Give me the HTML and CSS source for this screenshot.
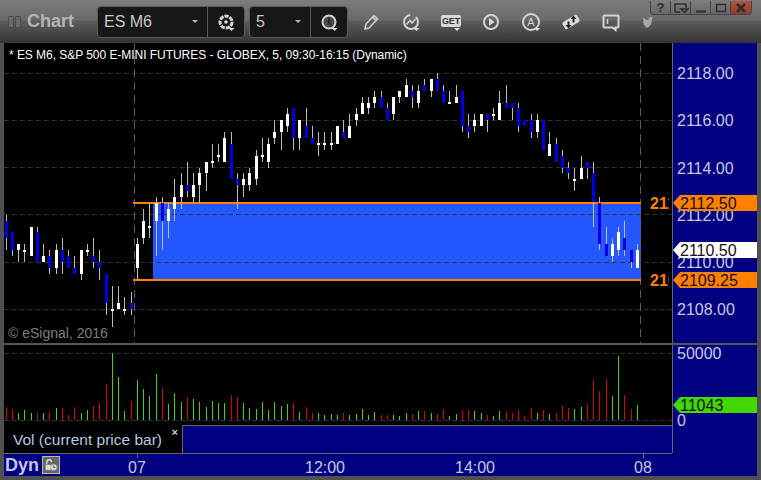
FILE: index.html
```html
<!DOCTYPE html>
<html lang="en">
<head>
<meta charset="utf-8">
<title>Chart</title>
<link rel="stylesheet" href="styles.css">
</head>
<body>
<div class="app">
  <header class="toolbar">
    <div class="grip"><span></span><span></span></div>
    <div class="app-title">Chart</div>
    <div class="combo combo-symbol">
      <div class="combo-field"><span>ES M6</span><i class="caret"></i></div>
      <button class="combo-btn">
        <svg class="icon" viewBox="0 0 20 20"><circle cx="10" cy="10" r="6" class="s-thick" stroke-dasharray="4.200 1"/><circle cx="10" cy="10" r="1.800" class="f"/><path d="M12.500 16h6l-3 3z" class="f"/></svg>
      </button>
    </div>
    <div class="combo combo-interval">
      <div class="combo-field"><span>5</span><i class="caret"></i></div>
      <button class="combo-btn">
        <svg class="icon" viewBox="0 0 20 20"><circle cx="10" cy="10" r="6.500" class="s-med ring-fill"/><path d="M10 5.500V10.500L13 14" class="s-dark"/><path d="M12.500 16h6l-3 3z" class="f"/></svg>
      </button>
    </div>
    <div class="tools">
      <svg class="icon" viewBox="0 0 20 20"><path d="M4 17l1-5L13 3.500l3.500 3.500L8 16z" class="s-thin"/><path d="M11.500 5l3.500 3.500" class="s-thin"/></svg>
      <svg class="icon" viewBox="0 0 20 20"><circle cx="10" cy="10" r="7" class="s-med" stroke-dasharray="32 6"/><path d="M5.500 12.500L9 8.500l2 2.500 3.500-4" class="s-thin"/><path d="M12.500 16h6l-3 3z" class="f"/></svg>
      <div class="tool-get"><span>GET</span><i></i></div>
      <svg class="icon" viewBox="0 0 20 20"><circle cx="10" cy="10" r="7" class="s-med"/><path d="M8 6l5.500 4L8 14z" class="f"/></svg>
      <div class="tool-auto"><span>A</span><i></i></div>
      <svg class="icon" viewBox="0 0 20 20"><rect x="1.500" y="6" width="17" height="8" rx="2" class="f" transform="rotate(-32 10 10)"/><path d="M12.500 3.500l-3 3.500h2v3.500h2V7h2z" class="f-dark"/><path d="M7.500 16.500l3-3.500h-2V9.500h-2V13h-2z" class="f-dark"/></svg>
      <svg class="icon" viewBox="0 0 20 20"><path d="M3.500 3.500h13a1 1 0 0 1 1 1v10a1 1 0 0 1-1 1h-2v2.500l-3-2.500h-8a1 1 0 0 1-1-1v-10a1 1 0 0 1 1-1z" class="s-med"/><path d="M6.500 7v5" class="s-thin"/></svg>
      <svg class="icon-bird" viewBox="0 0 20 20"><path d="M19 1l-2 2.500 2 0-2 2c0 6-2 11-7 13l-6 .5c2-.5 3-1.500 4-2.500-3 0-4-2-4.500-3h2C3.500 12 3 10 3 8.500l2 .5C3 7 3 4 4 3c2 2.500 4.500 4 7.500 4-.5-3 1.500-5 4-5 1 0 2 .5 2.500 1z" class="f-bird"/></svg>
    </div>
    <div class="window-btns">
      <button class="win-btn win-help">?</button>
      <button class="win-btn"><svg viewBox="0 0 20 14"><path d="M4 11V3h11v4M9 11h-5M10 8h7l-3.500 3.500z" class="win-glyph"/></svg></button>
      <button class="win-btn"><svg viewBox="0 0 20 14"><path d="M5 10.500h10" class="win-glyph win-heavy"/></svg></button>
      <button class="win-btn"><svg viewBox="0 0 20 14"><path d="M5.500 3.500h9v7h-9z" class="win-glyph"/></svg></button>
      <button class="win-btn win-close"><svg viewBox="0 0 20 14"><path d="M6 3l8 8M14 3l-8 8" class="win-glyph win-x"/></svg></button>
    </div>
  </header>

  <main class="chart-grid">
    <section class="pane price-pane">
      <div class="study-title">* ES M6, S&amp;P 500 E-MINI FUTURES - GLOBEX, 5, 09:30-16:15 (Dynamic)</div>
      <div class="copyright">© eSignal, 2016</div>
      <svg id="price-plot" class="plot" viewBox="4 43 668 300" width="668" height="300"></svg>
    </section>
    <svg id="price-axis" class="axis price-axis" viewBox="672 43 85 300" width="85" height="300"></svg>

    <section class="pane vol-pane">
      <svg id="vol-plot" class="plot" viewBox="4 345 668 80" width="668" height="80"></svg>
    </section>
    <svg id="vol-axis" class="axis vol-axis" viewBox="672 343 85 82" width="85" height="82"></svg>

    <div class="legend">
      <div class="legend-label"><span>Vol (current price bar)</span><b class="legend-close">×</b></div>
      <div class="legend-fill"></div>
    </div>
    <div class="axis-fill legend-axis"></div>

    <footer class="time-axis">
      <div class="dyn">Dyn</div>
      <div class="lock">
        <svg viewBox="0 0 17 17"><path d="M4 8V5.500a2.500 2.500 0 0 1 5 0" class="lock-shackle"/><path d="M2.500 8h7v6h-7z" class="lock-body"/><circle cx="11.500" cy="11" r="3.500" class="lock-body"/><path d="M11.500 9v2.200h1.500" class="lock-hand"/></svg>
      </div>
      <span class="tick tick-07">07</span>
      <span class="tick tick-12">12:00</span>
      <span class="tick tick-14">14:00</span>
      <span class="tick tick-08">08</span>
    </footer>
    <div class="axis-fill time-axis-fill"></div>
  </main>
</div>
<script src="chart.js"></script>
</body>
</html>
```
FILE: styles.css
```css
* { box-sizing: border-box; }
html, body { margin: 0; padding: 0; background: #555; }
body { width: 761px; height: 480px; overflow: hidden; font-family: "Liberation Sans", Arial, sans-serif; }

.app { position: relative; width: 761px; height: 480px; display: flex; flex-direction: column; background: #505050; }

/* toolbar */
.toolbar {
  height: 43px; flex: none; display: flex; align-items: center; position: relative; padding-left: 8px;
  background: linear-gradient(#7c7c7c 0, #696969 20px, #5c5c5c 21px, #343434 43px);
}
.grip { display: flex; gap: 1px; width: 15px; }
.grip span { width: 6px; height: 12px; border: 1px solid #4a4a4a; background: #6a6a6a; border-radius: 1px; }
.app-title { margin-left: 4px; width: 70px; font-size: 18px; font-weight: bold; color: #b4b4b4; }
.combo { display: flex; height: 32px; border: 1px solid #5a5a5a; border-radius: 4px; background: #171717; }
.combo-symbol { width: 148px; }
.combo-interval { width: 99px; margin-left: 4px; }
.combo-field { flex: 1; display: flex; align-items: center; justify-content: space-between; padding: 0 9px 0 6px; color: #c8c8c8; font-size: 16px; border-right: 1px solid #5a5a5a; }
.caret { width: 0; height: 0; border: 3px solid transparent; border-top-color: #bbb; border-bottom: 0; }
.combo-btn { width: 36px; border: 0; padding: 0; background: none; display: flex; align-items: center; justify-content: center; }
.icon { width: 20px; height: 20px; flex: none; display: block; }
.s-thick { fill: none; stroke: #d4d4d4; stroke-width: 3; }
.s-med { fill: none; stroke: #d4d4d4; stroke-width: 2; }
.s-thin { fill: none; stroke: #d4d4d4; stroke-width: 1.500; }
.s-dark { fill: none; stroke: #222; stroke-width: 1.500; }
.ring-fill { fill: #4a4a4a; }
.f { fill: #dedede; }
.f-dark { fill: #222; }
.f-bird { fill: #a8a8a8; }

.tools { display: flex; align-items: center; gap: 20px; margin-left: 13px; }
.tool-get { position: relative; width: 20px; height: 20px; }
.tool-get span { position: absolute; left: 0; top: 3px; width: 20px; height: 12px; border-radius: 2px; background: #d8d8d8; color: #333; font-size: 9px; font-weight: bold; line-height: 12px; text-align: center; letter-spacing: -.2px; }
.tool-get i, .tool-auto i { position: absolute; right: 1px; bottom: 1px; width: 0; height: 0; border: 3px solid transparent; border-top-color: #e0e0e0; border-bottom: 0; }
.tool-auto { position: relative; width: 20px; height: 20px; }
.tool-auto span { position: absolute; left: 3px; top: 3px; width: 14px; height: 14px; border-radius: 50%; box-shadow: 0 0 0 2px #d4d4d4; color: #d4d4d4; font-size: 11px; line-height: 14px; text-align: center; }
.icon-bird { width: 13px; height: 14px; flex: none; display: block; }

.window-btns { position: absolute; right: 9px; top: 1px; display: flex; height: 14px; border: 1px solid #454545; border-top: 0; border-radius: 0 0 4px 4px; overflow: hidden; background: linear-gradient(#7d7d7d, #686868); }
.win-btn { width: 20px; padding: 0; border: 0; border-right: 1px solid #454545; background: none; color: #2e2e2e; font: bold 13px/13px "Liberation Sans", sans-serif; }
.win-btn svg { display: block; width: 20px; height: 14px; }
.win-close { border-right: 0; background: linear-gradient(#b0563f, #8e3d2a); }
.win-glyph { fill: none; stroke: #2e2e2e; stroke-width: 1.500; }
.win-heavy { stroke-width: 2; }
.win-x { stroke-width: 2.500; }

/* chart */
.chart-grid {
  flex: none; margin-left: 4px; width: 753px; height: 433px; display: grid;
  grid-template-columns: 668px 85px; grid-template-rows: 300px 82px 28px 23px;
}
.pane { position: relative; background: #000; overflow: hidden; }
.plot, .axis { display: block; shape-rendering: crispEdges; }
.plot text, .axis text { shape-rendering: auto; font-family: "Liberation Sans", Arial, sans-serif; }
.study-title { position: absolute; left: 5px; top: 5px; z-index: 1; color: #fff; font-size: 12px; line-height: 15px; white-space: nowrap; letter-spacing: -.045px; }
.copyright { position: absolute; left: 4px; top: 282px; z-index: 1; color: #7e7e7e; font-size: 14px; line-height: 16px; white-space: nowrap; }
.axis { background: #000080; }
.axis text.label { fill: #c8c8e4; font-size: 16px; }
.axis text.flag-text { fill: #111; font-size: 16px; }
.plot text.level { fill: #ff8000; font-size: 16px; font-weight: bold; }
.vol-pane { padding-top: 0; border-top: 2px solid #555; }
.vol-axis { position: relative; z-index: 1; overflow: visible; }

.legend { display: flex; }
.legend-label { position: relative; width: 178px; background: #000; color: #b4c8e4; font-size: 15.500px; line-height: 28px; padding: 1px 0 0 9px; white-space: nowrap; }
.legend-close { position: absolute; right: 4px; top: -7px; color: #ccc; font-size: 11px; font-weight: bold; }
.legend-fill { flex: 1; background: #000080; border-top: 1px solid #666; border-left: 1px solid #666; }
.axis-fill { background: #000080; }
.legend-axis { border-left: 1px solid #666; }

.time-axis { position: relative; display: flex; align-items: center; background: #000080; border-top: 1px solid #666; padding-left: 1px; }
.dyn { color: #c4c4e0; font-size: 18px; font-weight: bold; line-height: 22px; }
.lock { width: 18px; height: 18px; margin-left: 3px; border: 1px solid #bbb; background: #666; }
.lock svg { display: block; width: 16px; height: 16px; }
.lock-shackle { fill: none; stroke: #ddd; stroke-width: 1.500; }
.lock-body { fill: #ddd; stroke: #666; stroke-width: .5; }
.lock-hand { fill: none; stroke: #444; stroke-width: 1; }
.tick { position: absolute; top: 5px; transform: translateX(-50%); color: #c8c8e4; font-size: 16px; line-height: 18px; }
.tick::before { content: ""; position: absolute; left: 50%; top: -5px; width: 1px; height: 4px; background: #777; }
.tick-07 { left: 133px; }
.tick-12 { left: 321px; }
.tick-14 { left: 471px; }
.tick-08 { left: 639px; }
.tick-12::before, .tick-14::before { display: none; }
```
FILE: chart.js
```js
var NS = 'http://www.w3.org/2000/svg';
function el(parent, name, attrs, text) {
  var n = document.createElementNS(NS, name);
  for (var k in attrs) n.setAttribute(k, attrs[k]);
  if (text) n.textContent = text;
  parent.appendChild(n);
  return n;
}
function rect(p, x, y, w, h, fill) { return el(p, 'rect', { x: x, y: y, width: w, height: h, fill: fill }); }
function barX(i) { return Math.floor(6.25 * i + 6); }

var BLUE = '#0000e6', WHITE = '#fff', WICK = '#bdbdbd';
var RED = '#e00000', GREEN = '#40d800';

/* wick top, body top, body bottom, wick bottom, blue? (page pixels) */
var bars = [
[215,221,238,250,1],[232,232,250,256,1],[244,244,250,262,0],[244,250,252,262,0],[227,227,256,256,0],
[227,232,262,262,1],[244,256,262,262,0],[250,256,268,274,1],[244,250,268,274,0],[238,250,262,274,1],
[250,256,268,268,1],[256,268,274,274,1],[250,250,274,280,0],[244,250,252,256,0],[238,256,262,268,1],
[250,262,268,280,1],[274,274,303,315,1],[286,309,311,327,0],[286,303,309,309,0],[297,309,311,315,0],
[292,303,309,315,1],[238,244,268,280,0],[209,221,238,244,0],[203,226,228,238,0],[197,203,221,256,0],
[197,203,221,250,1],[203,209,221,238,0],[179,197,209,221,0],[173,185,197,209,0],[162,185,191,197,1],
[173,185,197,203,0],[168,173,185,203,0],[162,162,173,191,0],[144,161,163,168,0],[144,155,157,162,0],
[132,138,162,162,0],[132,144,179,179,1],[173,179,185,209,1],[173,179,185,197,0],[168,173,185,191,0],
[150,156,179,185,0],[138,155,157,162,0],[138,144,162,168,0],[120,132,138,144,0],[120,120,132,150,0],
[108,114,126,132,0],[108,108,138,150,1],[120,120,138,150,0],[108,126,138,138,1],[126,138,144,144,1],
[132,143,145,156,0],[132,143,145,150,0],[132,143,145,150,0],[126,126,144,144,0],[120,132,138,138,1],
[114,126,138,138,0],[108,114,120,126,0],[97,103,114,114,0],[97,103,108,114,0],[91,97,103,108,0],
[91,97,108,108,1],[103,108,120,120,1],[97,97,114,120,0],[91,91,97,103,0],[79,85,97,97,0],
[85,91,97,108,1],[85,91,103,108,0],[79,85,91,91,1],[79,79,91,97,0],[73,79,91,91,1],
[85,91,103,103,1],[91,102,104,104,0],[85,97,103,103,0],[91,91,126,132,1],[114,126,132,138,1],
[114,120,126,132,0],[114,114,126,126,0],[114,114,120,132,1],[108,114,116,120,0],[91,103,120,120,0],
[85,103,108,108,1],[103,103,108,120,1],[103,108,126,132,1],[120,120,126,126,1],[114,120,132,138,1],
[114,120,132,138,0],[120,120,150,150,1],[132,144,156,156,0],[138,144,162,162,1],[150,156,168,173,1],
[162,168,173,179,1],[168,179,181,191,0],[156,168,179,179,0],[162,162,168,179,1],[162,173,202,227,1],
[197,203,244,250,1],[227,244,256,256,1],[238,244,256,262,0],[227,232,250,256,0],[221,238,250,256,1],
[250,250,262,268,1],[244,250,268,268,0]
];

/* bar height in pixels; positive = green, negative = red */
var volume = [
-13,-11,7,10,7,-7,7,-8,12,-12,-5,-13,7,10,-14,-17,-36,67,43,9,-19,40,31,24,46,-32,16,27,18,-23,
21,18,13,19,17,17,-25,-23,17,12,11,18,10,18,14,16,-17,8,-13,-7,7,5,6,5,-7,5,6,11,5,8,-5,-5,5,4,
7,-6,9,-9,7,-6,-11,4,6,-10,-10,9,7,-5,4,9,-9,-7,-10,-4,-12,7,-10,6,-7,-14,-12,11,13,-16,-40,-29,
-41,24,64,-25,-11,15
];

var GRID_Y = [73, 120, 167, 214, 262, 309];

var plot = document.getElementById('price-plot');
rect(plot, 153, 204, 488, 75, '#2457ff');
GRID_Y.forEach(function (y) {
  el(plot, 'line', { x1: 4, x2: 672, y1: y + .5, y2: y + .5, stroke: '#303030', 'stroke-dasharray': '5 3' });
});
[134, 640].forEach(function (x) {
  el(plot, 'line', { x1: x + .5, x2: x + .5, y1: 43, y2: 343, stroke: '#5c5c5c', 'stroke-dasharray': '8 5' });
});
rect(plot, 133, 202, 508, 2, '#ff8000');
rect(plot, 133, 279, 508, 2, '#ff8000');
bars.forEach(function (b, i) {
  var x = barX(i);
  rect(plot, x, b[0], 1, b[3] - b[0], WICK);
  rect(plot, x - 1, b[1], 3, b[2] - b[1], b[4] ? BLUE : WHITE);
});
el(plot, 'text', { x: 650, y: 209, 'class': 'level' }, '2112.50');
el(plot, 'text', { x: 650, y: 286, 'class': 'level' }, '2109.25');
/* the level labels run under the axis and are cut a little before it */
rect(plot, 669, 195, 3, 18, '#000');
rect(plot, 669, 272, 3, 18, '#000');

function flag(svg, y, fill, label) {
  el(svg, 'path', { d: 'M673 ' + (y + 8) + 'L680 ' + y + 'H757V' + (y + 16) + 'H680Z', fill: fill, 'shape-rendering': 'auto' });
  el(svg, 'text', { x: 680, y: y + 14, 'class': 'flag-text' }, label);
}
var axis = document.getElementById('price-axis');
el(axis, 'rect', { x: 672, y: 43, width: 1, height: 300, fill: '#666' });
[['2118.00', 73], ['2116.00', 120], ['2114.00', 168], ['2112.00', 215], ['2110.00', 262], ['2108.00', 309]].forEach(function (t) {
  el(axis, 'text', { x: 677, y: t[1] + 6, 'class': 'label' }, t[0]);
});
flag(axis, 195, '#ff8000', '2112.50');
flag(axis, 242, '#fff', '2110.50');
flag(axis, 272, '#ff8000', '2109.25');

var vol = document.getElementById('vol-plot');
[353, 420].forEach(function (y) {
  el(vol, 'line', { x1: 4, x2: 672, y1: y + .5, y2: y + .5, stroke: '#303030', 'stroke-dasharray': '5 3' });
});
volume.forEach(function (v, i) {
  var h = Math.abs(v);
  rect(vol, barX(i), 420 - h, 1, h, v > 0 ? GREEN : RED);
});

var vaxis = document.getElementById('vol-axis');
rect(vaxis, 672, 343, 85, 2, '#555');
el(vaxis, 'rect', { x: 672, y: 345, width: 1, height: 80, fill: '#666' });
el(vaxis, 'text', { x: 677, y: 359, 'class': 'label' }, '50000');
el(vaxis, 'text', { x: 677, y: 426, 'class': 'label' }, '0');
flag(vaxis, 397, '#40d800', '11043');
```
